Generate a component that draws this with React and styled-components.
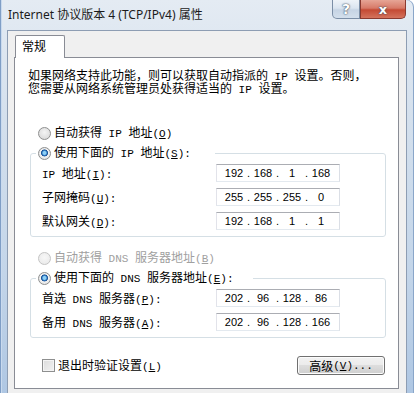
import React from 'react';
import styled, { createGlobalStyle } from 'styled-components';

const CJK = `"Noto Sans CJK SC", "Noto Sans", sans-serif`;
const UI = `"Noto Sans", "Noto Sans CJK SC", sans-serif`;
const MONO = `"Liberation Mono", "Noto Sans CJK SC", monospace`;

const Global = createGlobalStyle`
  html, body { margin: 0; padding: 0; background: #ffffff; }
  body { font-family: ${CJK}; }
  #root { width: 414px; height: 393px; }
`;

const Window = styled.div`
  width: 414px;
  height: 393px;
  box-sizing: border-box;
  display: flex;
  flex-direction: column;
  padding: 0 7px;
  overflow: hidden;
  border-top-right-radius: 7px;
  background: linear-gradient(180deg, #e4ebf3 0%, #d4e0ed 30%, #c3d5e9 70%, #afc7e3 100%);
  box-shadow: inset 1px 0 0 #7f9ec6, inset 2px 0 0 #c9daee, inset -1px 0 0 #8aa6c9;
`;

const TitleBar = styled.div`
  height: 30px;
  flex: none;
  display: flex;
  justify-content: space-between;
  align-items: flex-start;
`;

const Title = styled.div`
  padding: 7px 0 0 1px;
  font: 12px/16px ${UI};
  color: #1b1b1b;
  white-space: nowrap;
`;

const CaptionButtons = styled.div`
  display: flex;
  margin-right: 1px;
`;

const CaptionButton = styled.div`
  height: 19px;
  box-sizing: border-box;
  display: flex;
  align-items: center;
  justify-content: center;
  border: 1px solid ${(p) => (p.$close ? '#8a3a30' : '#7b8ea6')};
  border-top: none;
  width: ${(p) => (p.$close ? '46px' : '28px')};
  border-radius: ${(p) => (p.$close ? '0 0 5px 0' : '0 0 0 5px')};
  background: ${(p) =>
    p.$close
      ? 'linear-gradient(180deg, #e6a596 0%, #d77a68 45%, #c44a34 55%, #d4735d 100%)'
      : 'linear-gradient(180deg, #eef3f8 0%, #dbe5f0 45%, #c6d4e4 55%, #d3dfec 100%)'};
  color: #ffffff;
  font: bold ${(p) => (p.$close ? '13px' : '14px')} / 1 "DejaVu Sans", sans-serif;
  text-shadow: 0 0 1px #3c4a5c, 0 0 2px #3c4a5c;
`;

const Client = styled.div`
  flex: 1;
  display: flex;
  flex-direction: column;
  background: #f0f0f0;
  border: 1px solid #8d9db3;
  border-bottom: none;
  padding: 4px 7px 0 6px;
`;

const TabStrip = styled.div`
  display: flex;
  padding-left: 1px;
  margin-bottom: -1px;
  position: relative;
  z-index: 1;
`;

const Tab = styled.div`
  width: 50px;
  height: 23px;
  box-sizing: border-box;
  border: 1px solid #898c95;
  border-bottom: none;
  border-radius: 2px 2px 0 0;
  background: #ffffff;
  padding: 2px 0 0 6px;
  font: 12px/16px ${CJK};
  color: #000;
`;

const Panel = styled.div`
  background: #ffffff;
  border: 1px solid #898c95;
  padding: 10px 12px 13px 13px;
  display: flex;
  flex-direction: column;
`;

const Intro = styled.div`
  display: flex;
  flex-direction: column;
`;

const IntroLine = styled.div`
  height: 13px;
  font: 12px/13px ${CJK};
  color: #000;
  white-space: nowrap;
  overflow: visible;
`;

const A = styled.span`
  font-family: ${MONO};
  font-size: 11px;
`;

const RadioRow = styled.label`
  display: flex;
  align-items: center;
  gap: 3px;
  height: 16px;
  padding-left: ${(p) => p.$indent ?? 10}px;
  margin-top: ${(p) => p.$top ?? 0}px;
  font: 12px/16px ${CJK};
  color: ${(p) => (p.$disabled ? '#a0a0a0' : '#000')};
  white-space: nowrap;
`;

const RadioDot = styled.span`
  width: 13px;
  height: 13px;
  box-sizing: border-box;
  border-radius: 50%;
  flex: none;
  border: 1px solid ${(p) => (p.$disabled ? '#c4c4c4' : '#8e8f8f')};
  background: ${(p) =>
    p.$checked
      ? 'radial-gradient(circle at 50% 45%, #8ed0f5 0 1.5px, #2a74c0 2.5px, #1b4f8f 3.2px, #f2f2f2 3.8px, #d8d8d8 100%)'
      : p.$disabled
      ? 'radial-gradient(circle at 50% 40%, #f7f7f7 0%, #e8e8e8 100%)'
      : 'radial-gradient(circle at 50% 40%, #f4f4f4 0%, #d4d4d4 100%)'};
`;

const Group = styled.fieldset`
  margin: 4px 0 0 2px;
  padding: 3px 0 6px 5px;
  border: 1px solid #d5dfe5;
  border-radius: 3px;
  min-width: 0;
`;

const Legend = styled.legend`
  padding: 0 ${(p) => p.$gap}px 0 2px;
  height: 16px;
`;

const Rows = styled.div`
  display: grid;
  grid-template-columns: 174px 124px;
  grid-auto-rows: 18px;
  row-gap: 6px;
  align-items: center;
  padding-left: 6px;
`;

const FieldLabel = styled.div`
  height: 18px;
  font: 12px/18px ${CJK};
  color: #000;
  white-space: nowrap;
`;

const IpBox = styled.div`
  width: 124px;
  height: 18px;
  box-sizing: border-box;
  display: flex;
  align-items: center;
  padding-left: 5px;
  background: #fff;
  border: 1px solid;
  border-color: #abadb3 #dbdfe6 #e3e9ef #e2e3ea;
  font: 11px/16px "Liberation Sans", Arial, sans-serif;
  color: #000;
`;

const Octet = styled.span`
  width: 24px;
  text-align: center;
`;

const Dot = styled.span`
  width: 5px;
  text-align: center;
`;

const Footer = styled.div`
  display: flex;
  justify-content: space-between;
  align-items: center;
  height: 19px;
  margin-top: 18px;
  padding-left: 14px;
`;

const CheckRow = styled.label`
  display: flex;
  align-items: center;
  gap: 3px;
  height: 16px;
  font: 12px/16px ${CJK};
  color: #000;
  white-space: nowrap;
`;

const CheckBox = styled.span`
  width: 13px;
  height: 13px;
  box-sizing: border-box;
  border: 1px solid #8e8f8f;
  background: linear-gradient(135deg, #dcdcdc 0%, #f2f2f2 100%);
  box-shadow: inset 0 0 0 1px #f4f4f4;
`;

const Button = styled.div`
  width: 88px;
  height: 19px;
  box-sizing: border-box;
  margin-right: 1px;
  border: 1px solid #707070;
  border-radius: 3px;
  background: linear-gradient(180deg, #f2f2f2 0%, #ebebeb 50%, #dddddd 50%, #cfcfcf 100%);
  box-shadow: inset 0 0 0 1px #fcfcfc;
  display: flex;
  align-items: center;
  justify-content: center;
  font: 12px/16px ${CJK};
  color: #000;
  white-space: nowrap;
`;

function Ip({ parts }) {
  return (
    <IpBox>
      {parts.map((p, i) => (
        <React.Fragment key={i}>
          {i > 0 && <Dot>.</Dot>}
          <Octet>{p}</Octet>
        </React.Fragment>
      ))}
    </IpBox>
  );
}

function Key({ k }) {
  return (
    <A>
      (<u>{k}</u>)
    </A>
  );
}

export default function App() {
  return (
    <>
      <Global />
      <Window>
        <TitleBar>
          <Title>Internet 协议版本 4 (TCP/IPv4) 属性</Title>
          <CaptionButtons>
            <CaptionButton>?</CaptionButton>
            <CaptionButton $close>x</CaptionButton>
          </CaptionButtons>
        </TitleBar>
        <Client>
          <TabStrip>
            <Tab>常规</Tab>
          </TabStrip>
          <Panel>
            <Intro>
              <IntroLine>
                如果网络支持此功能，则可以获取自动指派的<A> IP </A>设置。否则，
              </IntroLine>
              <IntroLine>
                您需要从网络系统管理员处获得适当的<A> IP </A>设置。
              </IntroLine>
            </Intro>

            <RadioRow $top={31}>
              <RadioDot />
              <span>
                自动获得<A> IP </A>地址<Key k="O" />
              </span>
            </RadioRow>
            <Group>
              <Legend $gap={24}>
                <RadioRow $indent={0}>
                  <RadioDot $checked />
                  <span>
                    使用下面的<A> IP </A>地址<Key k="S" />
                    <A>:</A>
                  </span>
                </RadioRow>
              </Legend>
              <Rows>
                <FieldLabel>
                  <A>IP </A>地址<Key k="I" />
                  <A>:</A>
                </FieldLabel>
                <Ip parts={['192', '168', '1', '168']} />
                <FieldLabel>
                  子网掩码<Key k="U" />
                  <A>:</A>
                </FieldLabel>
                <Ip parts={['255', '255', '255', '0']} />
                <FieldLabel>
                  默认网关<Key k="D" />
                  <A>:</A>
                </FieldLabel>
                <Ip parts={['192', '168', '1', '1']} />
              </Rows>
            </Group>

            <RadioRow $top={13} $disabled>
              <RadioDot $disabled />
              <span>
                自动获得<A> DNS </A>服务器地址<Key k="B" />
              </span>
            </RadioRow>
            <Group>
              <Legend $gap={20}>
                <RadioRow $indent={0}>
                  <RadioDot $checked />
                  <span>
                    使用下面的<A> DNS </A>服务器地址<Key k="E" />
                    <A>:</A>
                  </span>
                </RadioRow>
              </Legend>
              <Rows>
                <FieldLabel>
                  首选<A> DNS </A>服务器<Key k="P" />
                  <A>:</A>
                </FieldLabel>
                <Ip parts={['202', '96', '128', '86']} />
                <FieldLabel>
                  备用<A> DNS </A>服务器<Key k="A" />
                  <A>:</A>
                </FieldLabel>
                <Ip parts={['202', '96', '128', '166']} />
              </Rows>
            </Group>

            <Footer>
              <CheckRow>
                <CheckBox />
                <span>
                  退出时验证设置<Key k="L" />
                </span>
              </CheckRow>
              <Button>
                高级<Key k="V" />
                <A>...</A>
              </Button>
            </Footer>
          </Panel>
        </Client>
      </Window>
    </>
  );
}
